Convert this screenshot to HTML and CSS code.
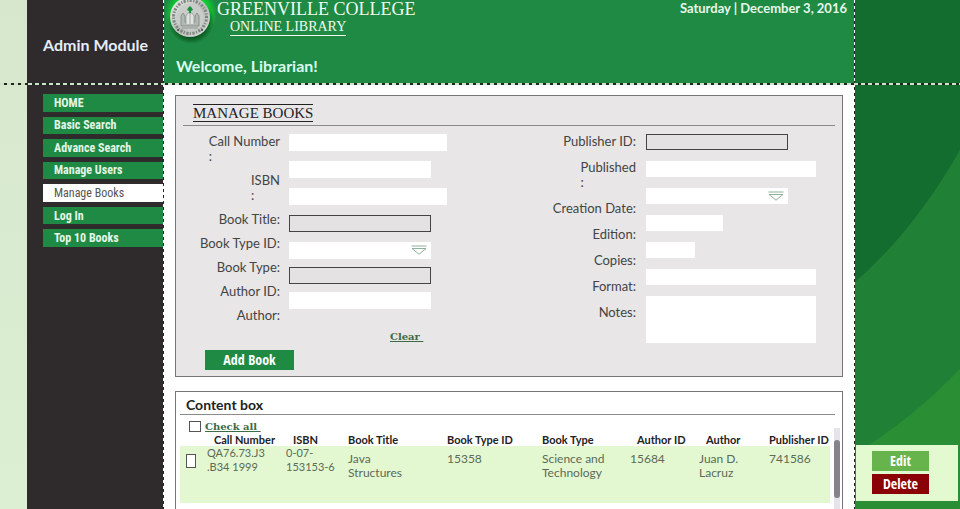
FILE: index.html
```html
<!DOCTYPE html>
<html lang="en">
<head>
<meta charset="utf-8">
<title>Greenville College Online Library</title>
<link rel="stylesheet" href="styles.css">
</head>
<body>
<div class="page">
  <nav class="sidebar">
    <h2 class="module">Admin Module</h2>
    <ul class="menu">
      <li><a href="#">HOME</a></li>
      <li><a href="#">Basic Search</a></li>
      <li><a href="#">Advance Search</a></li>
      <li><a href="#">Manage Users</a></li>
      <li><a href="#" class="current">Manage Books</a></li>
      <li><a href="#">Log In</a></li>
      <li><a href="#">Top 10 Books</a></li>
    </ul>
  </nav>

  <div class="center">
    <header class="banner">
      <div class="brand">
        <svg class="seal" viewBox="0 0 52 44" aria-hidden="true">
          <defs>
            <radialGradient id="glow"><stop offset="0.7" stop-color="#0bd02c"/><stop offset="1" stop-color="#0bd02c" stop-opacity="0"/></radialGradient>
            <radialGradient id="shade"><stop offset="0.7" stop-color="#06501c"/><stop offset="1" stop-color="#06501c" stop-opacity="0"/></radialGradient>
            <linearGradient id="silver" x1="0" y1="0" x2="1" y2="1"><stop offset="0" stop-color="#eef0ee"/><stop offset="0.55" stop-color="#b9bdb9"/><stop offset="1" stop-color="#dcdedc"/></linearGradient>
          </defs>
          <circle cx="26" cy="13" r="26" fill="url(#glow)"/>
          <circle cx="26" cy="21" r="23" fill="url(#shade)"/>
          <circle cx="25" cy="17" r="20" fill="url(#silver)"/>
          <circle cx="25" cy="17" r="16.500" fill="none" stroke="#7d867f" stroke-width="3" stroke-dasharray="1.200 1.300 2.200 1.500"/>
          <circle cx="25" cy="17" r="13.500" fill="#c9ccc9"/>
          <path d="M16 26V16l2-3 2 3v6h10v-6l2-3 2 3v10z" fill="#b4b8b4" stroke="#858c86" stroke-width="0.900"/>
          <path d="M21 24v-8l2-3h4l2 3v8M25 13v11" fill="#e2e4e2" stroke="#959b96" stroke-width="0.800"/>
          <path d="M25 6l2 2 1 2-2 1v2h-2v-2l-2-1 1-2z" fill="#15923a"/>
          <path d="M17 28h16" stroke="#8f958f"/>
          <circle cx="13" cy="30" r="1" fill="#444"/><circle cx="37" cy="30" r="1" fill="#444"/>
        </svg>
        <h1 class="name">GREENVILLE COLLEGE <span class="sub">ONLINE LIBRARY</span></h1>
        <p class="date">Saturday | December 3, 2016</p>
      </div>
      <p class="welcome">Welcome, Librarian!</p>
    </header>

    <main class="content">
      <form class="panel manage">
        <div class="panel-head"><h2 class="title">MANAGE BOOKS</h2></div>
        <div class="fields">
          <div class="labels left">
            <label for="call">Call Number<br>:</label>
            <label for="isbn">ISBN<br>:</label>
            <label for="title">Book Title:</label>
            <label for="typeid">Book Type ID:</label>
            <label for="type">Book Type:</label>
            <label for="authorid">Author ID:</label>
            <label for="author">Author:</label>
          </div>
          <div class="controls left">
            <input id="call" class="wide">
            <input id="isbn">
            <input id="title" class="wide">
            <input id="typeid" class="outlined">
            <div class="group">
              <span class="drop"><select id="type"><option></option></select>
                <svg class="arrow" viewBox="0 0 16 10" aria-hidden="true"><path d="M0.500 1H15.500M1 3.500H15L8 9.200z"/></svg></span>
              <input id="authorid" class="outlined">
              <input id="author">
            </div>
            <a href="#" class="clear">Clear&nbsp;</a>
          </div>
          <div class="labels right">
            <label for="pubid">Publisher ID:</label>
            <label for="published">Published<br>:</label>
            <label for="created">Creation Date:</label>
            <label for="edition">Edition:</label>
            <label for="copies">Copies:</label>
            <label for="format">Format:</label>
            <label for="notes">Notes:</label>
          </div>
          <div class="controls right">
            <input id="pubid" class="outlined">
            <input id="published" class="full">
            <span class="drop"><select id="created"><option></option></select>
              <svg class="arrow" viewBox="0 0 16 10" aria-hidden="true"><path d="M0.500 1H15.500M1 3.500H15L8 9.200z"/></svg></span>
            <input id="edition" class="short">
            <input id="copies" class="tiny">
            <input id="format" class="full">
            <textarea id="notes" class="full"></textarea>
          </div>
        </div>
        <button type="button" class="add">Add Book</button>
      </form>

      <section class="panel results">
        <div class="panel-head"><h2 class="box-title">Content box</h2></div>
        <div class="list">
          <div class="rows">
            <div class="check-all"><input type="checkbox" id="all"><label for="all">Check all&nbsp;</label></div>
            <table>
              <colgroup><col class="c0"><col class="c1"><col class="c2"><col class="c3"><col class="c4"><col class="c5"><col class="c6"><col class="c7"><col class="c8"></colgroup>
              <thead>
                <tr><th></th><th class="inset">Call Number</th><th class="inset">ISBN</th><th>Book Title</th><th>Book Type ID</th><th>Book Type</th><th class="inset">Author ID</th><th class="inset">Author</th><th>Publisher ID</th></tr>
              </thead>
              <tbody>
                <tr><td><input type="checkbox" class="pick" aria-label="Select QA76.73.J3 .B34 1999"></td><td class="high">QA76.73.J3<br>.B34 1999</td><td class="high">0-07-<br>153153-6</td><td>Java<br>Structures</td><td>15358</td><td>Science and<br>Technology</td><td>15684</td><td>Juan D.<br>Lacruz</td><td>741586</td></tr>
              </tbody>
            </table>
          </div>
          <div class="track"><div class="thumb"></div></div>
        </div>
      </section>
    </main>
  </div>

  <aside class="side">
    <svg class="swoosh" viewBox="0 0 105 509" preserveAspectRatio="none" aria-hidden="true">
      <path d="M0 282Q58 232 105 150V509H0z" fill="#208035"/>
      <path d="M0 454Q58 418 105 369V509H0z" fill="#2a8e35"/>
    </svg>
    <div class="actions">
      <button type="button" class="edit">Edit</button>
      <button type="button" class="delete">Delete</button>
    </div>
  </aside>
</div>
</body>
</html>
```
FILE: styles.css
```css
* { box-sizing: border-box; }

body {
  margin: 0;
  font-family: Lato, "Liberation Sans", sans-serif;
  background: #d9e9cf;
}

h1, h2, p, ul { margin: 0; padding: 0; }

.page {
  position: relative;
  display: grid;
  grid-template-columns: 136px minmax(0, 1fr) 105px;
  height: 100vh;
  padding-left: 27px;
  overflow: hidden;
  background: linear-gradient(#d6e7cd, #dcefd2);
}

/* horizontal guide line under the banner */
.page::after {
  content: "";
  position: absolute;
  top: 83px;
  left: 0;
  right: 0;
  height: 2px;
  background: repeating-linear-gradient(90deg, #d0e2cc 0 4px, #1c2a1e 4px 7px);
}

/* sidebar */
.sidebar { padding: 36px 0 0 16px; background: #2f2b2d; }

.module {
  font-size: 16px;
  line-height: 18px;
  font-weight: 700;
  color: #e3eef8;
}

.menu {
  display: grid;
  grid-auto-rows: 1fr;
  gap: 5px;
  height: 153px;
  margin-top: 40px;
  list-style: none;
}

.menu a {
  display: flex;
  align-items: center;
  height: 100%;
  padding-left: 11px;
  background: #1f8a44;
  color: #e4f6e6;
  font-family: "Liberation Sans Narrow", "Roboto Condensed", "Liberation Sans", sans-serif;
  font-size: 12px;
  font-weight: 700;
  text-decoration: none;
}

.menu .current { background: #fff; color: #555; font-weight: 400; }

/* center column */
.center {
  position: relative;
  display: flex;
  flex-direction: column;
  background: #fff;
}

.center::before, .center::after {
  content: "";
  position: absolute;
  top: 0;
  bottom: 0;
  width: 1px;
  background: repeating-linear-gradient(#fff 0 3px, #1c2a1e 3px 6px);
}
.center::before { left: 0; }
.center::after { right: 0; }

.banner { height: 84px; background: #1f8a44; color: #e6f7ea; }

.brand { display: flex; align-items: flex-start; height: 56px; padding: 0 8px 0 2px; }

.seal { width: 52px; height: 44px; flex: none; }

.name {
  font: 400 18px/18px "Liberation Serif", serif;
  color: #f0faf0;
  white-space: nowrap;
}

.sub {
  display: table;
  margin-left: 13px;
  font-size: 14px;
  line-height: 17px;
  border-bottom: 1px solid #f0faf0;
}

.date { margin-left: auto; font-size: 13px; line-height: 16px; font-weight: 700; }

.welcome { padding-left: 13px; font-size: 16px; line-height: 20px; font-weight: 700; color: #d9fbee; }

.content {
  display: flex;
  flex: 1;
  flex-direction: column;
  gap: 14px;
  padding: 11px 12px 0 12px;
}

.panel { border: 1px solid #77757a; }

.panel-head { margin: 0 7px; border-bottom: 1px solid #8c8a8d; }

.manage { height: 282px; background: #e8e6e7; }
.manage .panel-head { height: 30px; padding: 8px 0 0 10px; }

.title {
  display: table;
  font: 400 15px/16px "Liberation Serif", serif;
  color: #222;
  border-top: 1px solid #222;
  border-bottom: 1px solid #222;
}

.fields {
  display: grid;
  grid-template-columns: 108px 170px minmax(0, 1fr) 196px;
  height: 224px;
  padding-top: 8px;
}

.labels {
  display: flex;
  flex-direction: column;
  align-items: flex-end;
  font-size: 13px;
  line-height: 15px;
  color: #444;
}
.labels.left { gap: 9px; padding-right: 4px; }
.labels.right { gap: 11px; padding-right: 10px; }

.controls { display: flex; flex-direction: column; align-items: flex-start; }
.controls.left { gap: 10px; padding-left: 5px; }
.controls.right { gap: 11px; }

.group { display: flex; flex-direction: column; gap: 8px; }

input, select, textarea {
  display: block;
  width: 142px;
  height: 17px;
  margin: 0;
  padding: 0 4px;
  border: 0;
  border-radius: 0;
  background: #fff;
  font-size: 12px;
  appearance: none;
  resize: none;
}
.right input, .right select { height: 16px; }
.fields .outlined { border: 1px solid #444; background: #e4e2e3; }
.wide { width: 158px; }
.full { width: 170px; }
.short { width: 77px; }
.tiny { width: 49px; }
textarea { height: 47px; }

.drop { position: relative; }
.arrow { position: absolute; right: 4px; top: 3px; width: 16px; height: 10px; fill: none; stroke: #8fb09a; }

.clear, .check-all label {
  font: 700 10px/12px "DejaVu Serif", serif;
  color: #3d6b45;
  text-decoration: underline;
}
.clear { margin: 12px 0 0 101px; }

.add {
  display: block;
  width: 89px;
  height: 20px;
  margin-left: 29px;
}

button {
  padding: 0;
  border: 0;
  color: #fff;
  background: #1f8a44;
  font: 700 14px/18px "Open Sans Condensed", "Roboto Condensed", "Liberation Sans Narrow", "Open Sans", sans-serif;
}

/* results */
.results { display: flex; flex: 1; flex-direction: column; border-bottom: 0; }
.results .panel-head { height: 23px; margin-left: 4px; padding: 4px 0 0 6px; }
.box-title { font-size: 14px; line-height: 18px; font-weight: 700; color: #222; }

.list { display: flex; flex: 1; padding-left: 4px; }
.rows { flex: 1; min-width: 0; padding-top: 5px; }

.check-all { display: flex; align-items: center; gap: 4px; height: 13px; padding-left: 9px; }
input[type="checkbox"] { width: 12px; height: 11px; padding: 0; border: 1px solid #555; }
input[type="checkbox"].pick { width: 10px; height: 14px; margin: 2px 0 0 6px; }

table { width: 100%; table-layout: fixed; border-collapse: collapse; }
th, td { padding: 0; text-align: left; white-space: nowrap; vertical-align: top; }
th { height: 13px; font-size: 11px; line-height: 13px; color: #222; }
th.inset { padding-left: 7px; }
td { height: 57px; padding-top: 6px; background: #e3f8d1; color: #5c6a58; font-size: 12px; line-height: 14px; }
td.high { padding-top: 0; font-size: 11px; }
.c0 { width: 27px; }
.c1 { width: 79px; }
.c2 { width: 62px; }
.c3 { width: 99px; }
.c4 { width: 95px; }
.c5 { width: 88px; }
.c6 { width: 69px; }
.c7 { width: 70px; }

.track { width: 6px; margin: 13px 2px 0 4px; padding-top: 12px; background: #e6e4ea; }
.thumb { height: 58px; border-radius: 3px; background: #858389; }

/* right side */
.side { position: relative; padding: 445px 2px 0 1px; background: #136d2f; }
.swoosh { position: absolute; inset: 0; width: 100%; height: 100%; }

.actions {
  position: relative;
  display: flex;
  flex-direction: column;
  gap: 3px;
  height: 56px;
  padding: 6px 0 0 16px;
  background: #e3f9d0;
}
.actions button { width: 57px; height: 20px; }
.actions .edit { background: #67b34c; }
.actions .delete { background: #8b0206; }
```
